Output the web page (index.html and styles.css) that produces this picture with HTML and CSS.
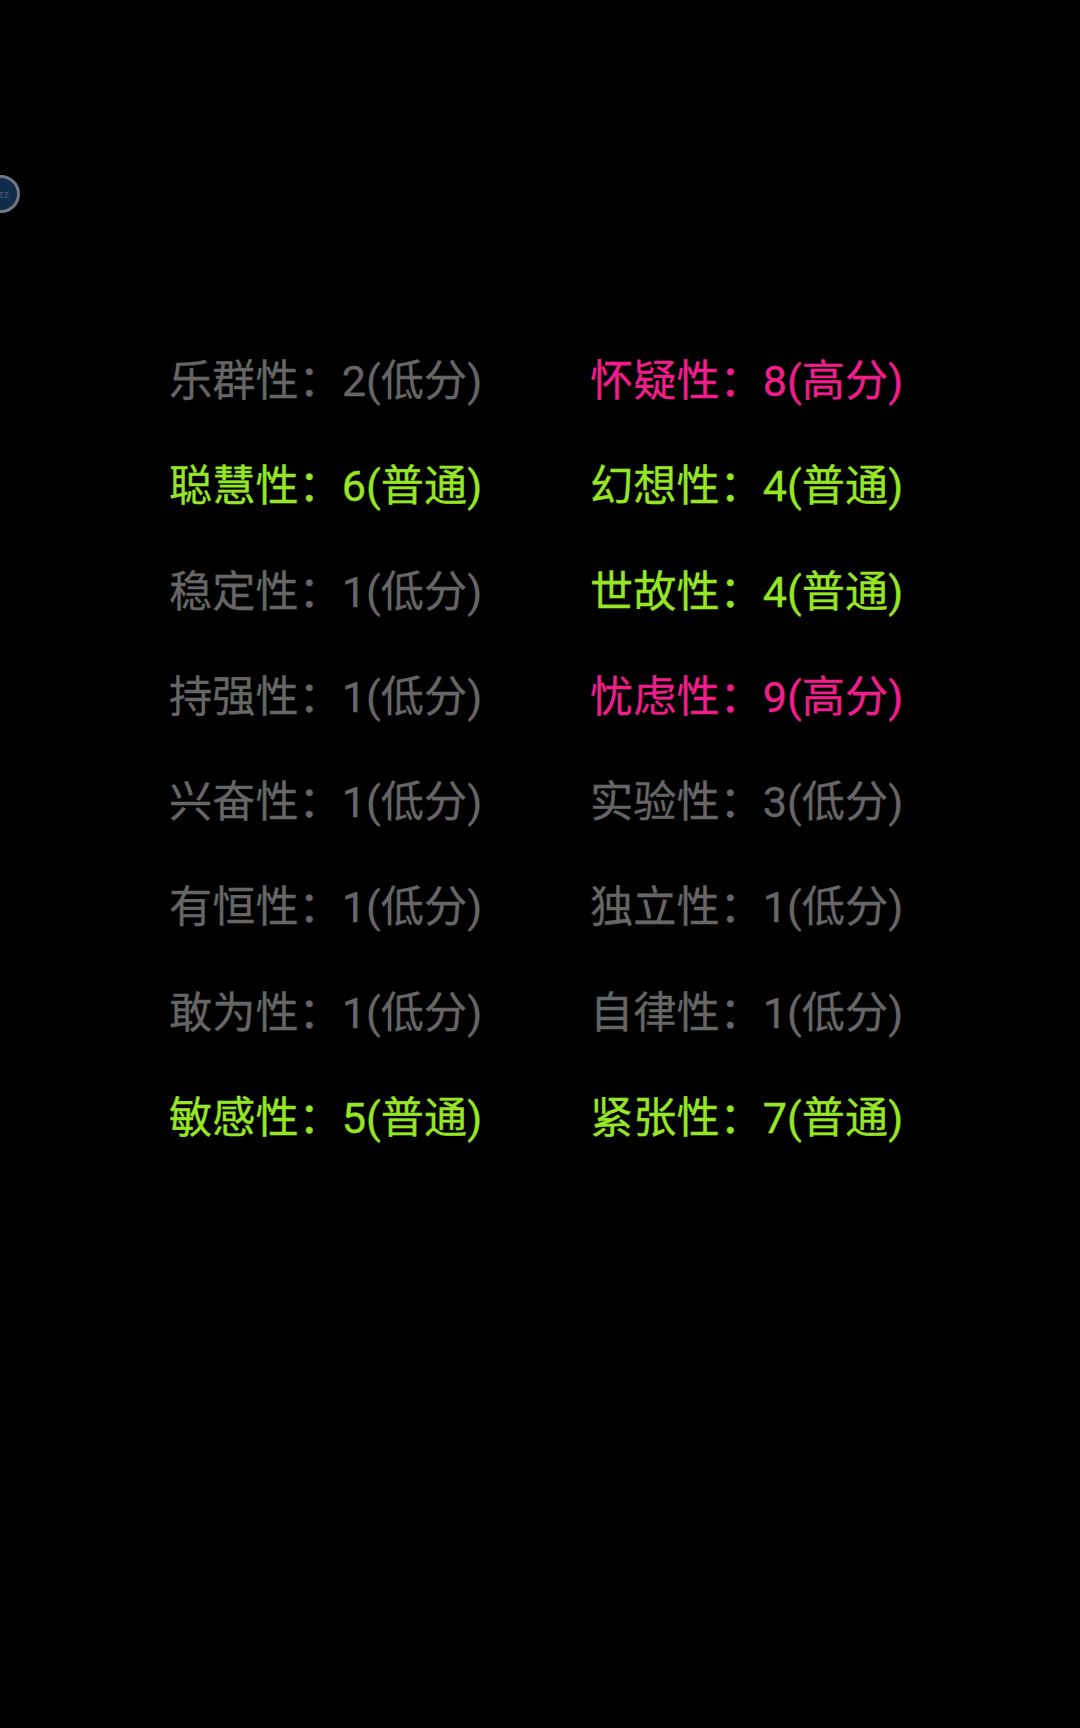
FILE: index.html
```html
<!DOCTYPE html>
<html lang="zh-CN">
<head>
<meta charset="utf-8">
<title>16PF</title>
<link rel="stylesheet" href="styles.css">
</head>
<body>
<div class="badge"><span class="badge-text">zz</span></div>
<main class="grid">
<div class="item low">乐群性：2(低分)</div>
<div class="item high">怀疑性：8(高分)</div>
<div class="item mid">聪慧性：6(普通)</div>
<div class="item mid">幻想性：4(普通)</div>
<div class="item low">稳定性：1(低分)</div>
<div class="item mid">世故性：4(普通)</div>
<div class="item low">持强性：1(低分)</div>
<div class="item high">忧虑性：9(高分)</div>
<div class="item low">兴奋性：1(低分)</div>
<div class="item low">实验性：3(低分)</div>
<div class="item low">有恒性：1(低分)</div>
<div class="item low">独立性：1(低分)</div>
<div class="item low">敢为性：1(低分)</div>
<div class="item low">自律性：1(低分)</div>
<div class="item mid">敏感性：5(普通)</div>
<div class="item mid">紧张性：7(普通)</div>
</main>
</body>
</html>
```
FILE: styles.css
```css
html, body {
  margin: 0;
  padding: 0;
  background: #000;
}
body {
  width: 1080px;
  height: 1728px;
  overflow: hidden;
  position: relative;
  font-family: Roboto, "Noto Sans CJK SC", sans-serif;
}
.badge {
  position: absolute;
  left: -18px;
  top: 175px;
  width: 38px;
  height: 38px;
  box-sizing: border-box;
  border: 3px solid #6f7884;
  border-radius: 50%;
  background: #132b4a;
  display: flex;
  align-items: center;
  justify-content: flex-end;
  padding-right: 8px;
  filter: blur(0.5px);
}
.badge-text {
  font-size: 11px;
  color: #4a5b70;
}
.grid {
  display: grid;
  grid-template-columns: 421px 421px;
  grid-auto-rows: 105.3px;
  padding: 329px 0 0 169px;
}
.item {
  font-size: 43.2px;
  line-height: 105.3px;
  white-space: nowrap;
  -webkit-text-stroke: 0.3px currentColor;
}
.low { color: #666666; }
.mid { color: #96e626; }
.high { color: #ee1e8c; }
```
